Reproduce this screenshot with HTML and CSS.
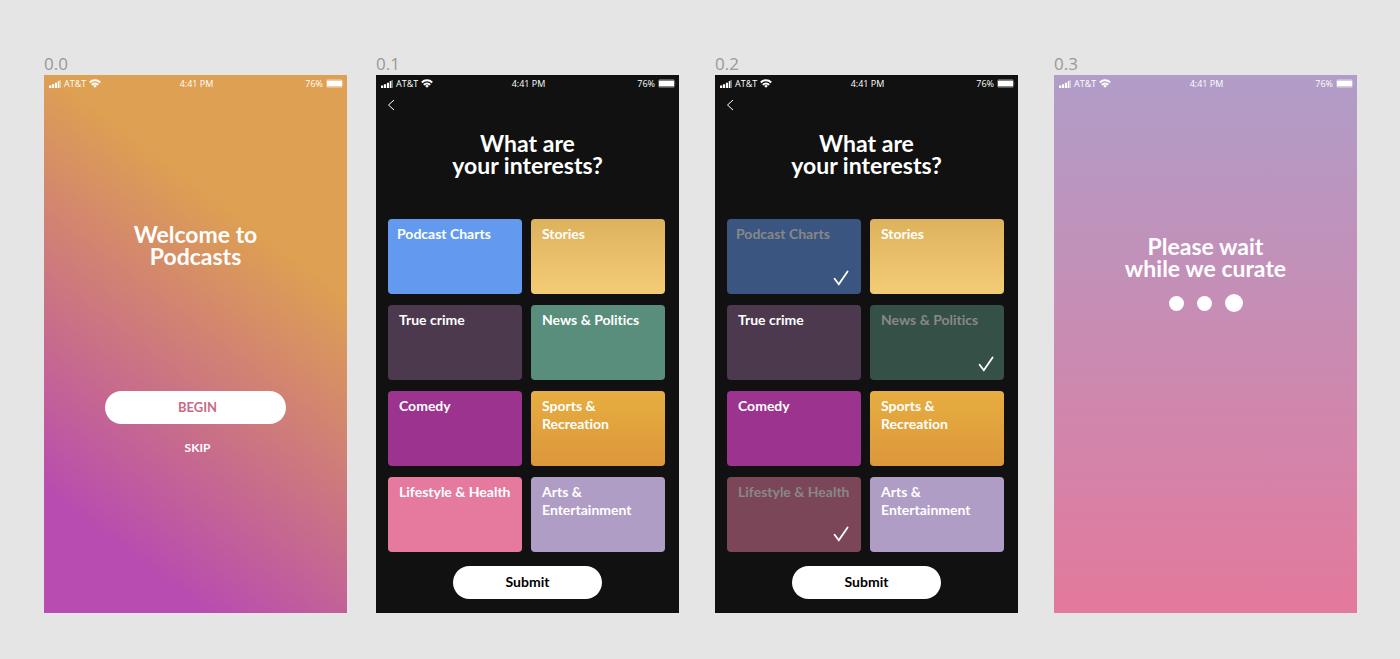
FILE: index.html
```
<!DOCTYPE html>
<html lang="en">
<head>
<meta charset="utf-8">
<meta name="viewport" content="width=device-width, initial-scale=1">
<title>Podcasts onboarding</title>
<link rel="stylesheet" href="styles.css">
</head>
<body>
<svg class="defs" aria-hidden="true">
  <symbol id="signal" viewBox="0 0 12 8"><path fill="currentColor" d="M0 5.500h2.200V8H0zM2.900 4.300h2.200V8H2.900zM5.900 2.700h2.200V8H5.900zM8.800 1h1.500v7H8.800z"/><path fill="currentColor" opacity=".4" d="M10.300 0H12v8h-1.700z"/></symbol>
  <symbol id="wifi" viewBox="0 0 12 9"><g fill="none" stroke="currentColor" stroke-width="2"><path d="M.8 3.500a7.400 7.400 0 0 1 10.400 0"/><path d="M2.800 5.900a4.500 4.500 0 0 1 6.400 0"/></g><path fill="currentColor" d="M4.200 6.900a2.600 2.600 0 0 1 3.600 0L6 8.800z"/></symbol>
  <symbol id="battery" viewBox="0 0 18 9"><rect x=".5" y=".5" width="16" height="8" rx="1.500" fill="none" stroke="currentColor" opacity=".3"/><rect x="1" y="1.500" width="15" height="6" rx=".6" fill="currentColor"/><path d="M17 3q1 1.500 0 3z" fill="currentColor" opacity=".4"/></symbol>
  <symbol id="check" viewBox="0 0 16 16"><path d="M1.600 8.800 5.800 14.300 14.600 1.400" fill="none" stroke="currentColor" stroke-width="1.800" stroke-linecap="round" stroke-linejoin="miter"/></symbol>
  <symbol id="back" viewBox="0 0 8 12"><path d="M7 1 1.500 6 7 11" fill="none" stroke="currentColor"/></symbol>
</svg>
<main class="boards">
  <section class="board">
    <p class="board-label">0.0</p>
    <div class="screen welcome">
      <div class="status"><span class="carrier"><svg class="signal"><use href="#signal"/></svg>AT&amp;T<svg class="wifi"><use href="#wifi"/></svg></span><span class="time">4:41 PM</span><span class="power">76%<svg class="battery"><use href="#battery"/></svg></span></div>
      <h1 class="title">Welcome to<br>Podcasts</h1>
      <button class="pill begin" type="button">BEGIN</button>
      <button class="skip" type="button">SKIP</button>
    </div>
  </section>
  <section class="board">
    <p class="board-label">0.1</p>
    <div class="screen dark">
      <div class="status"><span class="carrier"><svg class="signal"><use href="#signal"/></svg>AT&amp;T<svg class="wifi"><use href="#wifi"/></svg></span><span class="time">4:41 PM</span><span class="power">76%<svg class="battery"><use href="#battery"/></svg></span></div>
      <button class="back" type="button" aria-label="Back"><svg><use href="#back"/></svg></button>
      <h1 class="title">What are<br>your interests?</h1>
      <div class="tiles">
        <button class="tile charts" type="button" aria-pressed="false">Podcast Charts</button>
        <button class="tile stories" type="button" aria-pressed="false">Stories</button>
        <button class="tile crime" type="button" aria-pressed="false">True crime</button>
        <button class="tile news" type="button" aria-pressed="false">News &amp; Politics</button>
        <button class="tile comedy" type="button" aria-pressed="false">Comedy</button>
        <button class="tile sports" type="button" aria-pressed="false">Sports &amp;<br>Recreation</button>
        <button class="tile health" type="button" aria-pressed="false">Lifestyle &amp; Health</button>
        <button class="tile arts" type="button" aria-pressed="false">Arts &amp;<br>Entertainment</button>
      </div>
      <button class="pill submit" type="submit">Submit</button>
    </div>
  </section>
  <section class="board">
    <p class="board-label">0.2</p>
    <div class="screen dark">
      <div class="status"><span class="carrier"><svg class="signal"><use href="#signal"/></svg>AT&amp;T<svg class="wifi"><use href="#wifi"/></svg></span><span class="time">4:41 PM</span><span class="power">76%<svg class="battery"><use href="#battery"/></svg></span></div>
      <button class="back" type="button" aria-label="Back"><svg><use href="#back"/></svg></button>
      <h1 class="title">What are<br>your interests?</h1>
      <div class="tiles">
        <button class="tile charts selected" type="button" aria-pressed="true">Podcast Charts<svg class="check"><use href="#check"/></svg></button>
        <button class="tile stories" type="button" aria-pressed="false">Stories</button>
        <button class="tile crime" type="button" aria-pressed="false">True crime</button>
        <button class="tile news selected" type="button" aria-pressed="true">News &amp; Politics<svg class="check"><use href="#check"/></svg></button>
        <button class="tile comedy" type="button" aria-pressed="false">Comedy</button>
        <button class="tile sports" type="button" aria-pressed="false">Sports &amp;<br>Recreation</button>
        <button class="tile health selected" type="button" aria-pressed="true">Lifestyle &amp; Health<svg class="check"><use href="#check"/></svg></button>
        <button class="tile arts" type="button" aria-pressed="false">Arts &amp;<br>Entertainment</button>
      </div>
      <button class="pill submit" type="submit">Submit</button>
    </div>
  </section>
  <section class="board">
    <p class="board-label">0.3</p>
    <div class="screen waiting">
      <div class="status"><span class="carrier"><svg class="signal"><use href="#signal"/></svg>AT&amp;T<svg class="wifi"><use href="#wifi"/></svg></span><span class="time">4:41 PM</span><span class="power">76%<svg class="battery"><use href="#battery"/></svg></span></div>
      <h1 class="title">Please wait<br>while we curate</h1>
      <div class="dots" role="status" aria-label="Loading"><i class="dot"></i><i class="dot"></i><i class="dot large"></i></div>
    </div>
  </section>
</main>
</body>
</html>
```
FILE: styles.css
```
* { box-sizing: border-box; }
body {
  margin: 0;
  background: #e5e5e5;
  font-family: Lato, "Open Sans", sans-serif;
  font-variant-ligatures: none;
}
button {
  border: 0;
  padding: 0;
  background: none;
  color: inherit;
  font: inherit;
  font-variant-ligatures: none;
  cursor: pointer;
}
.defs { display: none; }
.boards {
  display: flex;
  gap: 29px;
  padding: 53px 43px 45px 44px;
}
.board {
  flex: 1;
  display: flex;
  flex-direction: column;
}
.board:nth-child(n + 3) { margin-left: 7px; }
.board-label {
  margin: 0;
  color: #999;
  font: 17px/22px "Open Sans", sans-serif;
}
.screen {
  flex: 1;
  display: flex;
  flex-direction: column;
  color: #fff;
}
.welcome { background: linear-gradient(37deg, #b94cb0 16%, #dea052 71%); }
.dark { background: #111; }
.waiting { background: linear-gradient(#b09dc8, #e3799c); }

.status {
  display: grid;
  grid-template-columns: 1fr auto 1fr;
  align-items: center;
  height: 17px;
  padding: 0 3px 0 5px;
  font: 9px/17px "Open Sans", sans-serif;
}
.carrier, .power {
  display: flex;
  align-items: center;
  gap: 3px;
}
.power { justify-content: flex-end; }
.signal { width: 12px; height: 8px; }
.wifi { width: 12px; height: 9px; }
.battery { width: 18px; height: 9px; }

.title {
  margin: 0;
  font-size: 23px;
  font-weight: 700;
  line-height: 22px;
  text-align: center;
}
.welcome .title { margin-top: 131px; }
.waiting .title { margin-top: 143px; }
.dark .title { margin: 15px 0 43px; }

.back {
  align-self: flex-start;
  height: 25px;
  padding: 0 11px;
}
.back svg {
  display: block;
  width: 8px;
  height: 12px;
}

.pill {
  align-self: center;
  height: 33px;
  border-radius: 17px;
  background: #fff;
  font-weight: 700;
}
.begin {
  width: 60%;
  margin-top: 124px;
  padding: 0 0 2px 4px;
  color: #c86b86;
  font-size: 13px;
}
.skip {
  align-self: center;
  margin-top: 15px;
  padding-left: 4px;
  font-size: 12px;
  font-weight: 700;
  line-height: 18px;
}
.submit {
  width: 49%;
  margin: 14px 0;
  padding-bottom: 2px;
  color: #000;
  font-size: 14px;
}

.tiles {
  display: grid;
  grid-template-columns: 1fr 1fr;
  grid-auto-rows: 75px;
  gap: 11px 9px;
  padding: 0 14px 0 12px;
}
.tile {
  position: relative;
  display: flex;
  align-items: flex-start;
  padding: 6px 11px;
  border-radius: 4px;
  font-size: 14px;
  font-weight: 700;
  line-height: 18px;
  text-align: left;
  white-space: nowrap;
}
.charts { padding-left: 9px; background: #6399ef; }
.stories { background: linear-gradient(#ddb25c, #f5cc76); }
.crime { background: #4c394e; }
.news { background: #5a8e7c; }
.comedy { background: #9b338f; }
.sports { background: linear-gradient(#e7ae40, #dc973c); }
.health { background: #e57a9e; }
.arts { background: #b09dc6; }
.selected { color: #888; }
.charts.selected { background: #3a557f; }
.news.selected { background: #355047; }
.health.selected { background: #7c4659; }
.check {
  position: absolute;
  right: 12px;
  bottom: 8px;
  width: 16px;
  height: 16px;
  color: #fff;
}
.news .check { right: 10px; }
.health .check { bottom: 10px; }

.dots {
  display: flex;
  justify-content: center;
  align-items: center;
  gap: 13px;
  margin-top: 15px;
}
.dot {
  width: 15px;
  height: 15px;
  border-radius: 50%;
  background: #fff;
}
.large {
  width: 18px;
  height: 18px;
}
```
